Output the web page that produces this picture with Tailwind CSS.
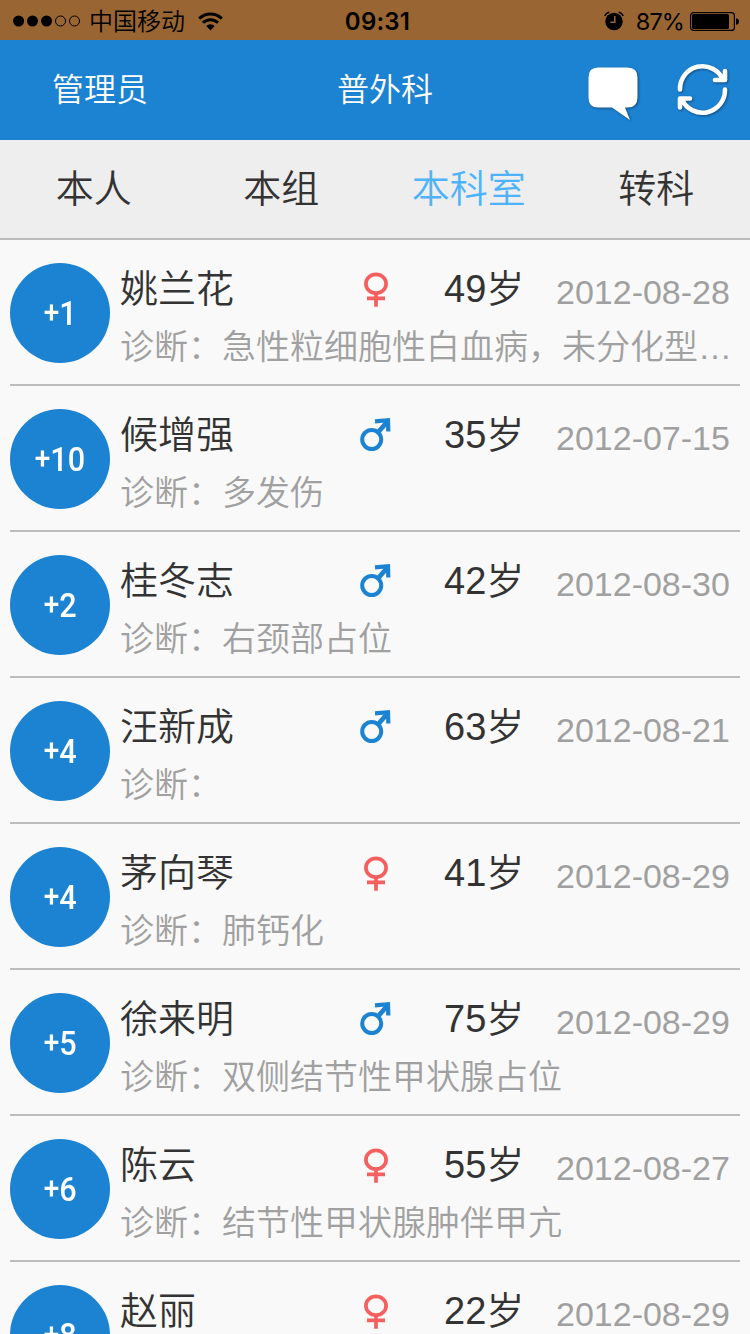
<!DOCTYPE html>
<html lang="zh-CN">
<head>
<meta charset="utf-8">
<title>普外科</title>
<script src="https://cdn.jsdelivr.net/npm/@tailwindcss/browser@4"></script>
</head>
<body class="w-[750px] h-[1334px] overflow-hidden bg-[#f9f9f9] font-['Liberation_Sans','Noto_Sans_CJK_SC',sans-serif] font-[350] text-[#333]">
<div class="flex h-[1334px] flex-col overflow-hidden">
  <div class="grid h-10 shrink-0 grid-cols-[1fr_auto_1fr] items-center bg-[#996633] pl-[13px] pr-[11px] text-black">
    <div class="flex items-center">
      <svg class="mr-[9px] h-3 w-[67px]" viewBox="0 0 67 12"><circle cx="5.6" cy="6" r="5.5"/><circle cx="19.5" cy="6" r="5.5"/><circle cx="33.5" cy="6" r="5.5"/><g fill="none" stroke="#000"><circle cx="47.5" cy="6" r="5"/><circle cx="61.5" cy="6" r="5"/></g></svg>
      <span class="pt-0.5 text-[24px] leading-10">中国移动</span>
      <svg class="ml-[13px] h-[19px] w-[25px]" viewBox="0 0 25 19"><g fill="none" stroke="#000" stroke-width="3"><path d="M1.2 6.6a16 16 0 0 1 22.600 0"/><path d="M5 10.800a10.600 10.600 0 0 1 15 0"/></g><path d="M8.300 14a6 6 0 0 1 8.400 0L12.500 18.400z"/></svg>
    </div>
    <div class="pt-px pl-[3px] font-['Inter','Roboto',sans-serif] text-[24px] font-semibold tracking-[0.200px]">09:31</div>
    <div class="flex items-center justify-end">
      <svg class="mr-3 h-5 w-5" viewBox="0 0 20 20"><circle cx="10" cy="10.500" r="8.700"/><path d="M.8 5Q2 2 5.300 1.300M19.200 5Q18 2 14.700 1.300" fill="none" stroke="#000" stroke-width="1.500"/><path d="M10.800 5v6.300H6.500" fill="none" stroke="#996633" stroke-width="1.500"/></svg>
      <span class="mr-1.5 pt-px font-['Inter','Roboto',sans-serif] text-[23.500px] font-normal tracking-[-0.900px]">87%</span>
      <svg class="h-[19px] w-[49px]" viewBox="0 0 49 19"><rect x=".6" y=".6" width="43.800" height="17.800" rx="3" fill="none" stroke="#000" stroke-width="1.200"/><rect x="2" y="2" width="37" height="15" rx="1.500"/><path d="M46 6.200q3 .5 3 3.300t-3 3.300z"/></svg>
    </div>
  </div>

  <header class="flex h-[100px] shrink-0 items-center bg-[#1c82d2] pl-[52px] pr-4 text-[32px] text-white">
    <span class="w-[285px] shrink-0">管理员</span>
    <span class="w-[247px] shrink-0">普外科</span>
    <svg class="mt-1 h-[60px] w-[60px] shrink-0 drop-shadow-[1px_1px_1px_rgba(0,0,0,0.400)]" viewBox="584 62 60 60"><path fill="#fff" d="M598 67.500h29.500Q637.500 67.500 637.500 77.500v20Q637.500 107.500 627.500 107.500h-2.500L630 120 612 107.500H598Q588.500 107.500 588.500 97.500v-20Q588.500 67.500 598 67.500z"/></svg>
    <svg class="ml-[28px] h-[60px] w-[60px] shrink-0 drop-shadow-[1px_1px_1px_rgba(0,0,0,0.400)]" viewBox="672 60 60 60"><g fill="none" stroke="#fff" stroke-width="4.600" stroke-linecap="round" stroke-linejoin="round"><path d="M680 89.500A22.500 22.500 0 0 1 723 79.500M715 80h10V71M725 89.500A22.500 22.500 0 0 1 682 99.500M690 98.500h-10V107.500"/></g></svg>
  </header>

  <nav class="grid h-[100px] shrink-0 grid-cols-4 items-center border-b-2 border-[#bbb] bg-[#eee] text-center text-[38px]">
    <span>本人</span><span>本组</span><span class="text-[#4fb3fc]">本科室</span><span>转科</span>
  </nav>

  <main id="list" class="px-2.5"></main>
</div>
<script>
const patients = [
  [1, '姚兰花', 'f', 49, '2012-08-28', '急性粒细胞性白血病，未分化型白血病'],
  [10, '候增强', 'm', 35, '2012-07-15', '多发伤'],
  [2, '桂冬志', 'm', 42, '2012-08-30', '右颈部占位'],
  [4, '汪新成', 'm', 63, '2012-08-21', ''],
  [4, '茅向琴', 'f', 41, '2012-08-29', '肺钙化'],
  [5, '徐来明', 'm', 75, '2012-08-29', '双侧结节性甲状腺占位'],
  [6, '陈云', 'f', 55, '2012-08-27', '结节性甲状腺肿伴甲亢'],
  [8, '赵丽', 'f', 22, '2012-08-29', '']
];
const icons = {
  f: '<svg class="h-[36px] w-[36px]" viewBox="0 0 36 36" fill="none" stroke="#f45f5f" stroke-width="3.700"><ellipse cx="18" cy="12.700" rx="10.100" ry="9.300"/><path d="M18 22V35.700M9 27.400h18"/></svg>',
  m: '<svg class="h-[36px] w-[36px]" viewBox="0 0 36 36" fill="none" stroke="#1c82d2" stroke-width="4"><circle cx="13.700" cy="22.500" r="9.500"/><path stroke-width="4.800" d="M19.500 16L29 5"/><path stroke-width="4.200" d="M17 4.300L30 3.200 30.300 14.500"/></svg>'
};
document.getElementById('list').innerHTML = patients.map(([n, name, sex, age, date, diag]) => `
  <div class="flex h-[146px] gap-2.5 border-b-2 border-[#bdbdbd] pt-[23px]">
    <div class="flex size-[100px] shrink-0 items-center justify-center rounded-full bg-[#1c82d2] font-['Roboto',sans-serif] font-medium text-white">
      <span class="flex scale-x-[.9] items-center"><span class="text-[31px]">+</span><span class="text-[34px]">${n}</span></span>
    </div>
    <div class="min-w-0 flex-1">
      <div class="flex h-[52px] items-center text-[38px]">
        <span class="w-[238px]">${name}</span>
        <span class="w-[86px]">${icons[sex]}</span>
        <span class="w-[112px]">${age}岁</span>
        <span class="pt-1.5 text-[34px] whitespace-nowrap text-[#a0a0a0]">${date}</span>
      </div>
      <div class="h-[64px] w-[612px] truncate text-[34px] leading-[64px] text-[#a0a0a0]">诊断：${diag}</div>
    </div>
  </div>`).join('');
</script>
</body>
</html>
